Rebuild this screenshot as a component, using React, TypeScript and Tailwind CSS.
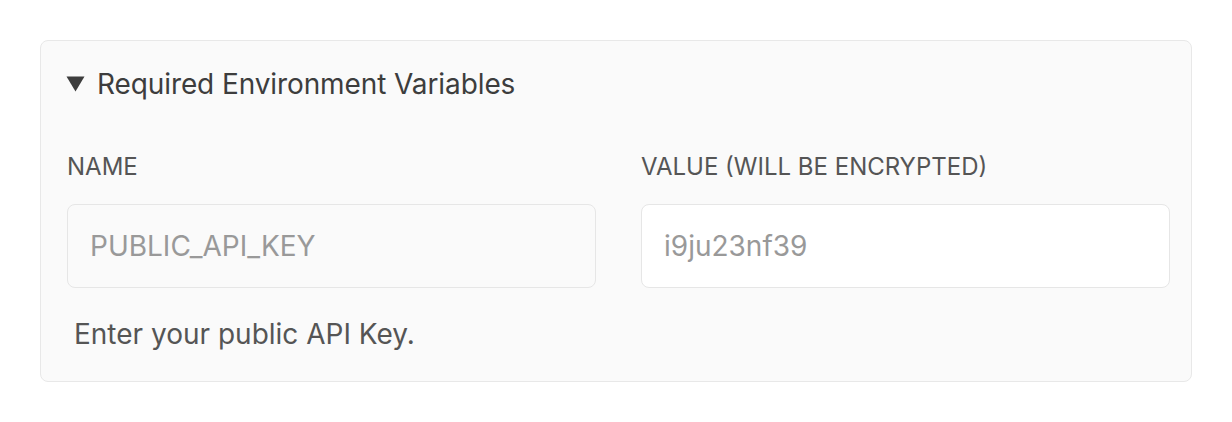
export default function App() {
  return (
    <div className="min-h-screen bg-white px-[40px] pt-[40px] font-['Inter',sans-serif]">
      <div className="w-[1152px] rounded-lg border border-[#e8e8e8] bg-[#fafafa] pb-[30px] pl-[25px] pr-[20px] pt-[25px]">
        {/* Section header */}
        <div className="flex h-[36px] items-center gap-[12px] text-[28px] text-[#3d3d3d]">
          <svg width="19" height="16" viewBox="0 0 19 16" className="shrink-0">
            <path d="M0.5 0.5h18L9.5 15.5z" fill="#3d3d3d" />
          </svg>
          <span className="tracking-[-0.1px]">Required Environment Variables</span>
        </div>

        <div className="mt-[50px] grid grid-cols-[529px_529px] gap-x-[45px] pl-[1px]">
          <div>
            <div className="h-[30px] text-[24px] leading-[30px] text-[#555555]">NAME</div>
            <input
              disabled
              placeholder="PUBLIC_API_KEY"
              className="mt-[22px] h-[84px] w-full rounded-lg border border-[#e6e6e6] bg-[#fafafa] px-[22px] text-[28px] text-[#999999] placeholder:text-[#999999] outline-none"
            />
          </div>
          <div>
            <div className="h-[30px] text-[24px] leading-[30px] text-[#555555]">VALUE (WILL BE ENCRYPTED)</div>
            <input
              placeholder="i9ju23nf39"
              className="mt-[22px] h-[84px] w-full rounded-lg border border-[#e6e6e6] bg-white px-[22px] text-[28px] text-[#999999] placeholder:text-[#999999] outline-none"
            />
          </div>
        </div>

        <p className="mt-[29px] pl-[8px] text-[28px] leading-[34px] text-[#555555]">Enter your public API Key.</p>
      </div>
    </div>
  );
}
